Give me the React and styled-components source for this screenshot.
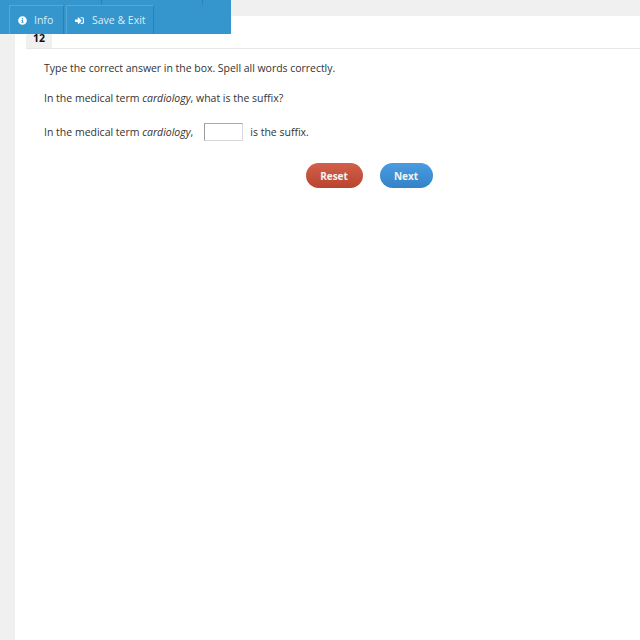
import React from "react";
import styled, { createGlobalStyle } from "styled-components";
import { FaInfoCircle, FaSignInAlt } from "react-icons/fa";

const GlobalStyle = createGlobalStyle`
    html, body {
        margin: 0;
        padding: 0;
        background: #f0f0f0;
    }
    body {
        font-family: "Open Sans", "Noto Sans", sans-serif;
    }
`;

const App = () => {
    return (
        <Page>
            <GlobalStyle />
            <Toolbar>
                <TopStrip>
                    <TopCell $width={93} />
                    <TopCell $width={99} />
                </TopStrip>
                <ToolRow>
                    <ToolButton $width={55} $gap={7}>
                        <FaInfoCircle size={9} />
                        Info
                    </ToolButton>
                    <ToolButton $width={88} $gap={8}>
                        <FaSignInAlt size={9} />
                        Save &amp; Exit
                    </ToolButton>
                </ToolRow>
            </Toolbar>
            <Panel>
                <TabRow>
                    <NumberTab>12</NumberTab>
                </TabRow>
                <Question>
                    <Line $spacing={-0.03}>
                        Type the correct answer in the box. Spell all words correctly.
                    </Line>
                    <Line>
                        In the medical term <em>cardiology</em>, what is the suffix?
                    </Line>
                    <AnswerLine>
                        <span>
                            In the medical term <em>cardiology</em>,
                        </span>
                        <AnswerBox type="text" />
                        <span>is the suffix.</span>
                    </AnswerLine>
                    <Buttons>
                        <ActionButton $width={57} $from="#d2604a" $to="#b9442f">
                            Reset
                        </ActionButton>
                        <ActionButton $width={53} $from="#4a9be0" $to="#3483c8">
                            Next
                        </ActionButton>
                    </Buttons>
                </Question>
            </Panel>
        </Page>
    );
};

// Styles
const Page = styled.div`
    box-sizing: border-box;
    width: 640px;
    height: 640px;
    padding: 16px 0 0 15px;
    overflow: hidden;
    position: relative;
`;

const Toolbar = styled.div`
    position: absolute;
    top: 0;
    left: 0;
    width: 231px;
    height: 34px;
    background: #3596cd;
    padding-left: 9px;
    box-sizing: border-box;
`;

const TopStrip = styled.div`
    display: flex;
    gap: 2px;
    height: 5px;
`;

const TopCell = styled.div`
    width: ${(props) => props.$width}px;
    box-sizing: border-box;
    border-right: 1px solid #2b82b5;
`;

const ToolRow = styled.div`
    display: flex;
    gap: 2px;
    height: 29px;
`;

const ToolButton = styled.div`
    box-sizing: border-box;
    width: ${(props) => props.$width}px;
    display: flex;
    align-items: center;
    gap: ${(props) => props.$gap}px;
    padding-left: 8px;
    border-top: 1px solid #55a9d8;
    border-left: 1px solid #55a9d8;
    border-right: 1px solid #2b82b5;
    color: #d8edf8;
    font-size: 10.5px;
    svg {
        color: #fff;
        flex-shrink: 0;
    }
`;

const Panel = styled.div`
    background: #fff;
    height: 624px;
    padding-top: 18px;
    box-sizing: border-box;
`;

const TabRow = styled.div`
    margin-left: 11px;
    border-bottom: 1px solid #e6e6e6;
    height: 15px;
    box-sizing: border-box;
`;

const NumberTab = styled.div`
    width: 26px;
    height: 14px;
    background: #f0f0f0;
    box-sizing: border-box;
    padding-left: 7px;
    font-size: 10.5px;
    font-weight: 700;
    line-height: 8px;
    color: #111;
`;

const Question = styled.div`
    padding: 12px 0 0 29px;
    color: #333;
    font-size: 10.5px;
    em {
        font-style: italic;
    }
`;

const Line = styled.div`
    line-height: 15px;
    margin-bottom: 15px;
    letter-spacing: ${(props) => props.$spacing || 0}px;
`;

const AnswerLine = styled.div`
    display: flex;
    align-items: center;
    height: 18px;
    margin-top: 17px;
    span:last-child {
        margin-left: 7px;
    }
`;

const AnswerBox = styled.input`
    box-sizing: border-box;
    width: 39px;
    height: 18px;
    margin: 0 0 0 11px;
    padding: 0;
    background: #fff;
    border: 1px solid #d8d8d8;
    border-left-color: #999;
    border-top-color: #aaa;
    border-radius: 0;
    outline: none;
`;

const Buttons = styled.div`
    display: flex;
    gap: 17px;
    margin: 22px 0 0 262px;
`;

const ActionButton = styled.div`
    width: ${(props) => props.$width}px;
    height: 25px;
    border-radius: 13px;
    display: flex;
    align-items: center;
    justify-content: center;
    padding-right: 1px;
    box-sizing: border-box;
    background: linear-gradient(${(props) => props.$from}, ${(props) => props.$to});
    color: #f4f4f4;
    font-size: 10px;
    font-weight: 700;
`;

export default App;
